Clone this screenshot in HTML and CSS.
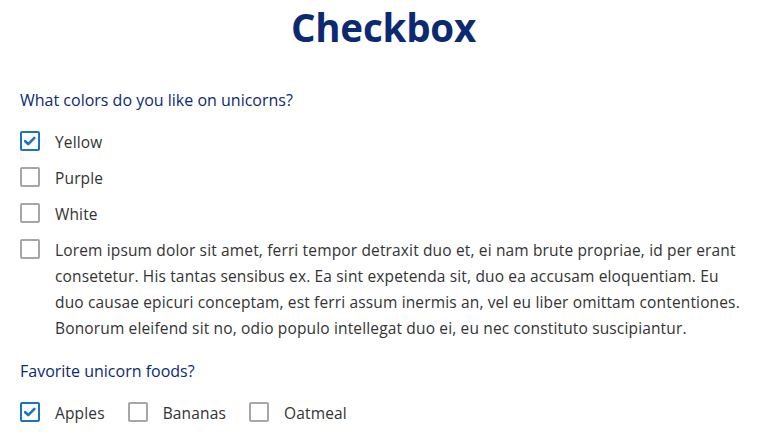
FILE: index.html
```html
<!DOCTYPE html>
<html>
<head>
<meta charset="utf-8">
<link rel="stylesheet" href="styles.css">
</head>
<body>
<h1 class="title">Checkbox</h1>
<section class="group first">
  <div class="legend">What colors do you like on unicorns?</div>
  <div class="stack">
    <label class="option"><span class="box checked"><svg viewBox="0 0 16 16" class="tick"><path d="M2.5 8.2 L6 11.5 L13 4.5" /></svg></span><span class="text">Yellow</span></label>
    <label class="option"><span class="box"></span><span class="text">Purple</span></label>
    <label class="option"><span class="box"></span><span class="text">White</span></label>
    <label class="option"><span class="box"></span><span class="text">Lorem ipsum dolor sit amet, ferri tempor detraxit duo et, ei nam brute propriae, id per erant consetetur. His tantas sensibus ex. Ea sint expetenda sit, duo ea accusam eloquentiam. Eu duo causae epicuri conceptam, est ferri assum inermis an, vel eu liber omittam contentiones. Bonorum eleifend sit no, odio populo intellegat duo ei, eu nec constituto suscipiantur.</span></label>
  </div>
</section>
<section class="group second">
  <div class="legend">Favorite unicorn foods?</div>
  <div class="inline">
    <label class="option"><span class="box checked"><svg viewBox="0 0 16 16" class="tick"><path d="M2.5 8.2 L6 11.5 L13 4.5" /></svg></span><span class="text">Apples</span></label>
    <label class="option"><span class="box"></span><span class="text">Bananas</span></label>
    <label class="option"><span class="box"></span><span class="text">Oatmeal</span></label>
  </div>
</section>
</body>
</html>
```
FILE: styles.css
```css
html, body {
  margin: 0;
  padding: 0;
  background: #ffffff;
}
body {
  font-family: "Open Sans", "Lato", sans-serif;
  color: #333333;
  padding: 0 20px;
}
.title {
  margin: 4px 0 0;
  text-align: center;
  font-size: 38.5px;
  line-height: 46px;
  font-weight: 700;
  color: #0b2a72;
  letter-spacing: -0.2px;
}
.legend {
  font-size: 16px;
  line-height: 20px;
  color: #0b2a72;
}
.group.first { margin-top: 40px; }
.group.second { margin-top: 20px; }
.stack {
  display: flex;
  flex-direction: column;
  gap: 10px;
  margin-top: 19px;
}
.inline {
  display: flex;
  gap: 23px;
  margin-top: 19px;
}
.option {
  display: flex;
  align-items: flex-start;
  gap: 14px;
  font-size: 15.5px;
  letter-spacing: 0.15px;
  line-height: 26px;
}
.box {
  flex: none;
  width: 20px;
  height: 20px;
  box-sizing: border-box;
  border: 2px solid #a6a6a6;
  border-radius: 2px;
  margin-top: 2px;
  display: flex;
  align-items: center;
  justify-content: center;
}
.box.checked {
  border-color: #1a73c9;
}
.tick {
  width: 14px;
  height: 14px;
}
.tick path {
  fill: none;
  stroke: #1a73c9;
  stroke-width: 3;
  stroke-linecap: round;
  stroke-linejoin: round;
}
.option .text { padding-left: 1px; }
```
